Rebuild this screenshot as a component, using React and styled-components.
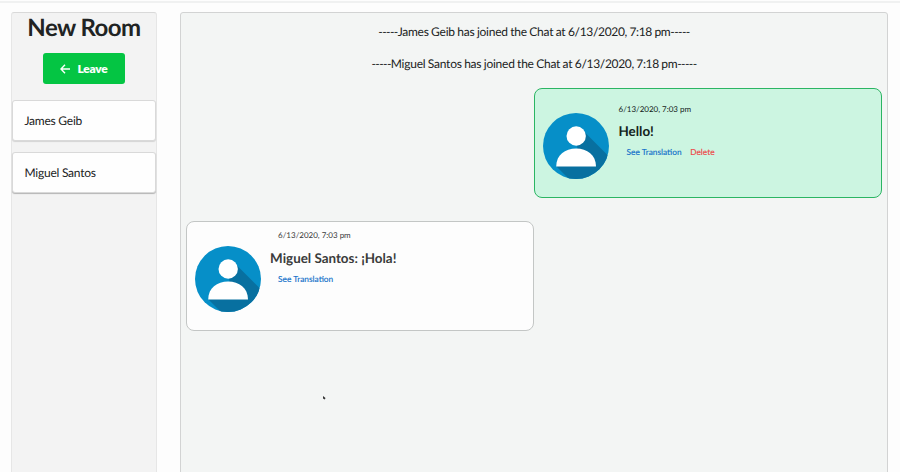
import React from "react";
import styled, { createGlobalStyle } from "styled-components";

const GlobalStyle = createGlobalStyle`
  * { box-sizing: border-box; }
  body {
    margin: 0;
    background: #fdfdfd;
    color: #212323;
    font-family: Lato, "Liberation Sans", sans-serif;
    text-rendering: geometricPrecision;
    overflow: hidden;
  }
`;

const Page = styled.div`
  display: flex;
  flex-direction: column;
  height: 472px;
  overflow: hidden;
`;

const TopRule = styled.div`
  flex: none;
  height: 3px;
  border-bottom: 2px solid #f0f1f1;
`;

const Layout = styled.main`
  flex: none;
  display: flex;
  align-items: flex-start;
  gap: 23px;
  padding: 9px 12px 0 11px;
`;

const Panel = styled.section`
  height: 480px;
  border: 1px solid #d2d3d3;
  border-radius: 3px;
`;

const Sidebar = styled(Panel)`
  width: 146px;
  display: flex;
  flex-direction: column;
  align-items: center;
  background: #f3f3f3;
  border-color: #d9d9d9 #e6e6e6;
`;

const RoomTitle = styled.h1`
  margin: 0;
  font-size: 24px;
  line-height: 30px;
  font-weight: 700;
  letter-spacing: -0.55px;
  white-space: nowrap;
`;

const LeaveButton = styled.button`
  display: flex;
  align-items: center;
  justify-content: center;
  gap: 7px;
  width: 82px;
  height: 31px;
  margin: 10px 0 16px;
  padding: 0;
  border: 0;
  border-radius: 3px;
  background: #04c543;
  color: #fbfffc;
  font: 800 12px/16px Lato, "Liberation Sans", sans-serif;
  letter-spacing: -0.25px;
`;

const UserList = styled.ul`
  display: flex;
  flex-direction: column;
  gap: 11px;
  width: 144px;
  margin: 0;
  padding: 0;
  list-style: none;
`;

const User = styled.li`
  height: 41px;
  padding: 0 11.5px;
  border: 1px solid #d9d9d9;
  border-radius: 3px;
  background: #fefefe;
  box-shadow: 0 1px 1px ${(p) => (p.$raised ? "#b4b4b4" : "#d4d4d4")};
  font-size: 12px;
  line-height: 40px;
  letter-spacing: -0.24px;
`;

const Chat = styled(Panel)`
  width: 708px;
  padding: 0 5px;
  background: #f3f5f4;
`;

const Notice = styled.p`
  margin: 0 0 14px;
  font-size: 12px;
  line-height: 18px;
  letter-spacing: -0.24px;
  word-spacing: -0.36px;
  text-align: center;
  white-space: nowrap;
`;

const Dashes = styled.span`
  letter-spacing: -0.6px;
`;

const NoticeTime = styled.time`
  letter-spacing: -0.32px;
`;

const Notices = styled.div`
  height: 75px;
  padding-top: 10px;
`;

const Messages = styled.div`
  display: flex;
  flex-direction: column;
  gap: 23px;
`;

const Message = styled.article`
  display: flex;
  align-items: flex-start;
  align-self: ${(p) => (p.$own ? "flex-end" : "flex-start")};
  width: 348px;
  height: 110px;
  padding-left: 7.5px;
  border: 1px solid ${(p) => (p.$own ? "#2bb563" : "#c3c6c5")};
  border-radius: 8px;
  background: ${(p) => (p.$own ? "#ccf5e1" : "#fdfdfd")};
  color: ${(p) => (p.$own ? "#14241b" : "#3a3b3b")};
`;

const Avatar = styled.svg`
  flex: none;
  width: 66px;
  height: 66px;
  margin-top: 24px;
`;

const Body = styled.div`
  padding: ${(p) => (p.$own ? "13px 0 0 10px" : "6px 0 0 9.6px")};
`;

const Time = styled.time`
  display: block;
  margin-left: ${(p) => (p.$own ? 0 : 8)}px;
  font-size: 8px;
  line-height: 14px;
`;

const Content = styled.h2`
  margin: ${(p) => (p.$own ? 6 : 7)}px 0 0;
  font-size: 13.4px;
  line-height: 18px;
  font-weight: 700;
`;

const Actions = styled.div`
  display: flex;
  gap: 8.6px;
  margin: 6px 0 0 8px;
`;

const Action = styled.a`
  color: ${(p) => (p.$danger ? "#ed4a4a" : "#1672ca")};
  font-size: 8.3px;
  line-height: 12px;
  font-weight: 500;
  -webkit-text-stroke: 0.1px currentColor;
  white-space: nowrap;
`;

const Pointer = styled.svg`
  position: absolute;
  left: 323px;
  top: 396px;
  width: 3px;
  height: 4px;
`;

function UserAvatar({ id }) {
  return (
    <Avatar viewBox="0 0 66 66" aria-hidden="true">
      <clipPath id={id}>
        <circle cx="33" cy="33" r="33" />
      </clipPath>
      <g clipPath={`url(#${id})`}>
        <rect width="66" height="66" fill="#068fc8" />
        <path d="M40 17.5 L70 47.5 V70 H30 L13.5 53.5 L30 36 Z" fill="#0870a0" />
        <path d="M26 28 L40 30 L35 38 L26 38 Z" fill="#068fc8" />
        <path d="M34 33 L42 23 L48 42 H36 Z" fill="#0870a0" />
      </g>
      <circle cx="33.2" cy="23" r="9.7" fill="#fff" />
      <path d="M13.2 53.5 C13.2 42 22 35.5 33.1 35.5 S53 42 53 53.5 Z" fill="#fff" />
    </Avatar>
  );
}

function JoinNotice({ name, time }) {
  return (
    <Notice>
      <Dashes>-----</Dashes>
      {`${name} has joined the Chat at `}
      <NoticeTime>{time}</NoticeTime>
      <Dashes>-----</Dashes>
    </Notice>
  );
}

function ChatMessage({ id, own, time, children }) {
  return (
    <Message $own={own}>
      <UserAvatar id={id} />
      <Body $own={own}>
        <Time $own={own}>{time}</Time>
        <Content $own={own}>{children}</Content>
        <Actions>
          <Action>See Translation</Action>
          {own && <Action $danger>Delete</Action>}
        </Actions>
      </Body>
    </Message>
  );
}

export default function App() {
  return (
    <Page>
      <GlobalStyle />
      <TopRule />
      <Layout>
        <Sidebar as="aside">
          <RoomTitle>New Room</RoomTitle>
          <LeaveButton>
            <svg width="10" height="10" viewBox="0 0 10 10" fill="none" stroke="currentColor" strokeWidth="1.4" aria-hidden="true">
              <path d="M5 .8 L1 5 L5 9.2 M1 5 H10" />
            </svg>
            Leave
          </LeaveButton>
          <UserList>
            <User>James Geib</User>
            <User $raised>Miguel Santos</User>
          </UserList>
        </Sidebar>
        <Chat>
          <Notices>
            <JoinNotice name="James Geib" time="6/13/2020, 7:18 pm" />
            <JoinNotice name="Miguel Santos" time="6/13/2020, 7:18 pm" />
          </Notices>
          <Messages>
            <ChatMessage id="avatar-own" own time="6/13/2020, 7:03 pm">Hello!</ChatMessage>
            <ChatMessage id="avatar-peer" time="6/13/2020, 7:03 pm">Miguel Santos: ¡Hola!</ChatMessage>
          </Messages>
        </Chat>
      </Layout>
      <Pointer viewBox="0 0 3 4" aria-hidden="true">
        <path d="M0 0 L2.5 2 L1.8 3.5 L0 2.5 Z" fill="#333" />
      </Pointer>
    </Page>
  );
}
